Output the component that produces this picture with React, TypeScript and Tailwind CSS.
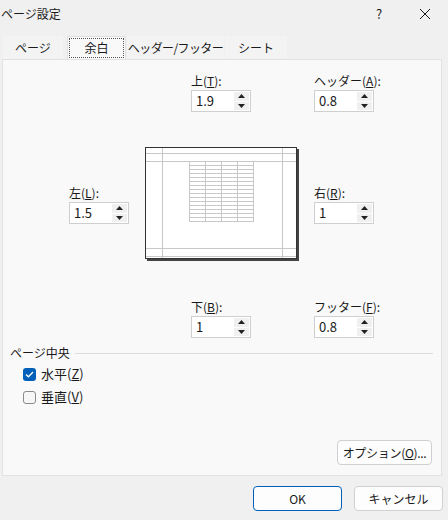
import React from 'react';

const Arrow = ({ up }: { up?: boolean }) => (
  <svg width="7" height="4" viewBox="0 0 7 4">
    {up ? <path d="M0 4 L3.5 0 L7 4 Z" fill="#222" /> : <path d="M0 0 L7 0 L3.5 4 Z" fill="#222" />}
  </svg>
);

const SpinBox = ({ value }: { value: string }) => (
  <div className="flex h-[22px] w-[60px] border border-[#cfcfcf] bg-white">
    <div className="flex-1 pl-[4px] text-[13px] leading-[20px] text-[#1a1a1a]">{value}</div>
    <div className="flex w-[16px] flex-col gap-[1px] py-[1px] pr-[1px]">
      <div className="flex flex-1 items-center justify-center bg-[#f0f0f0]">
        <Arrow up />
      </div>
      <div className="flex flex-1 items-center justify-center bg-[#f0f0f0]">
        <Arrow />
      </div>
    </div>
  </div>
);

const Field = ({ pre, acc, value }: { pre: string; acc: string; value: string }) => (
  <div className="flex w-[60px] flex-col gap-[1px]">
    <div className="whitespace-nowrap text-[12px] leading-[16px]">
      {pre}(<span className="underline">{acc}</span>):
    </div>
    <SpinBox value={value} />
  </div>
);

const Preview = () => {
  const rows = Array.from({ length: 16 }, (_, i) => 14 + i * 4);
  const cols = [44, 60, 76, 92, 108];
  return (
    <svg width="155" height="115" viewBox="0 0 155 115" className="shrink-0">
      <rect x="2" y="2" width="152" height="112" fill="#444" />
      <rect x="0.5" y="0.5" width="151" height="111" fill="#fff" stroke="#333" />
      <g stroke="#c8c8c8" strokeWidth="1">
        <line x1="1" y1="6.5" x2="151" y2="6.5" />
        <line x1="1" y1="14.5" x2="151" y2="14.5" />
        <line x1="1" y1="101.5" x2="151" y2="101.5" />
        <line x1="1" y1="109.5" x2="151" y2="109.5" />
        <line x1="17.5" y1="1" x2="17.5" y2="111" />
        <line x1="137.5" y1="1" x2="137.5" y2="111" />
        {rows.map((y) => (
          <line key={y} x1="44" y1={y + 0.5} x2="109" y2={y + 0.5} />
        ))}
        {cols.map((x) => (
          <line key={x} x1={x + 0.5} y1="14" x2={x + 0.5} y2="74" />
        ))}
      </g>
    </svg>
  );
};

const CheckRow = ({ checked, pre, acc }: { checked?: boolean; pre: string; acc: string }) => (
  <div className="flex h-[16px] items-center gap-[5px]">
    {checked ? (
      <div className="flex h-[13px] w-[13px] items-center justify-center rounded-[3px] bg-[#005fb8]">
        <svg width="9" height="7" viewBox="0 0 9 7">
          <path d="M1 3.5 L3.4 5.8 L8 1" stroke="#fff" strokeWidth="1.3" fill="none" />
        </svg>
      </div>
    ) : (
      <div className="h-[13px] w-[13px] rounded-[3px] border border-[#8a8a8a] bg-[#f6f6f6]" />
    )}
    <span className="text-[13px] leading-[16px]">
      {pre}(<span className="underline">{acc}</span>)
    </span>
  </div>
);

const App = () => {
  return (
    <div className="flex h-[520px] w-[448px] flex-col bg-[#f0f0f0] font-['Noto_Sans_CJK_JP',sans-serif] text-[#1a1a1a]">
      {/* title bar */}
      <div className="flex h-[28px] items-center justify-between pl-[1px]">
        <span className="text-[12px]">ページ設定</span>
        <div className="flex items-center">
          <span className="w-[46px] text-center text-[13px]">?</span>
          <svg width="46" height="14" viewBox="0 0 46 14">
            <path d="M18 2 L28 12 M28 2 L18 12" stroke="#1a1a1a" strokeWidth="1" />
          </svg>
        </div>
      </div>

      {/* tabs */}
      <div className="mt-[8px] flex h-[23px] items-end whitespace-nowrap pl-[3px] text-[12px]">
        <div className="flex h-[23px] w-[60px] items-center justify-center bg-[#f3f3f3]">ページ</div>
        <div className="ml-[4px] flex h-[23px] w-[59px] items-center justify-center border border-b-0 border-[#e0e0e0] bg-[#f9f9f9] p-[1px]">
          <div className="flex h-full w-full items-center justify-center border border-dotted border-[#555]">余白</div>
        </div>
        <div className="ml-[1px] flex h-[23px] w-[97px] items-center justify-center bg-[#f3f3f3] tracking-[-0.6px]">
          ヘッダー/フッター
        </div>
        <div className="ml-[1px] flex h-[23px] w-[62px] items-center justify-center bg-[#f3f3f3]">シート</div>
      </div>

      {/* panel */}
      <div className="ml-[2px] flex h-[417px] w-[440px] flex-col border border-[#e2e2e2] bg-[#f9f9f9]">
        <div className="mt-[13px] flex gap-[63px] pl-[188px]">
          <Field pre="上" acc="T" value="1.9" />
          <Field pre="ヘッダー" acc="A" value="0.8" />
        </div>

        <div className="mt-[35px] flex items-start">
          <div className="ml-[66px] mt-[38px]">
            <Field pre="左" acc="L" value="1.5" />
          </div>
          <div className="ml-[16px]">
            <Preview />
          </div>
          <div className="ml-[14px] mt-[38px]">
            <Field pre="右" acc="R" value="1" />
          </div>
        </div>

        <div className="mt-[37px] flex gap-[63px] pl-[188px]">
          <Field pre="下" acc="B" value="1" />
          <Field pre="フッター" acc="F" value="0.8" />
        </div>

        <div className="mt-[7px] flex items-center pl-[7px] pr-[8px]">
          <span className="text-[12px] leading-[16px]">ページ中央</span>
          <div className="ml-[5px] h-px flex-1 bg-[#dcdcdc]" />
        </div>

        <div className="mt-[5px] flex flex-col gap-[7px] pl-[20px]">
          <CheckRow checked pre="水平" acc="Z" />
          <CheckRow pre="垂直" acc="V" />
        </div>

        <div className="mb-[10px] mr-[9px] mt-auto flex justify-end">
          <button className="h-[25px] w-[95px] whitespace-nowrap rounded-[4px] border border-[#d0d0d0] bg-[#fdfdfd] text-[12px] tracking-[-0.3px]">
            オプション(<span className="underline">O</span>)...
          </button>
        </div>
      </div>

      {/* footer */}
      <div className="mt-[10px] flex gap-[12px] pl-[253px]">
        <button className="h-[25px] w-[89px] rounded-[4px] border border-[#005fb8] bg-[#fdfdfd] text-[12px]">OK</button>
        <button className="h-[25px] w-[89px] rounded-[4px] border border-[#d0d0d0] bg-[#fdfdfd] text-[12px]">キャンセル</button>
      </div>
    </div>
  );
};

export default App;
